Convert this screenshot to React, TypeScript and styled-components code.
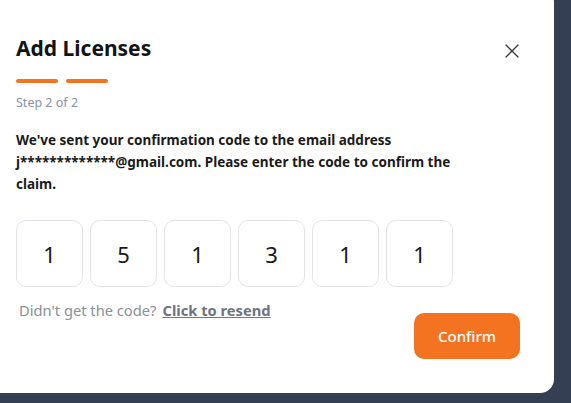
import React from "react";
import styled, { createGlobalStyle } from "styled-components";

const Global = createGlobalStyle`
  html, body { margin: 0; padding: 0; background: #343f53; overflow: hidden; }
  body { font-family: "Noto Sans", "Open Sans", sans-serif; width: 571px; height: 403px; }
`;

const Panel = styled.div`
  box-sizing: border-box;
  width: 570px;
  height: 405px;
  margin-top: -12px;
  margin-left: -16px;
  background: #ffffff;
  border-radius: 14px;
  padding: 44px 29px 0 32px;
  display: flex;
  flex-direction: column;
`;

const Header = styled.div`
  display: flex;
  align-items: center;
  justify-content: space-between;
`;

const Title = styled.h2`
  margin: 0;
  font-size: 21px;
  line-height: 28px;
  font-weight: 700;
  color: #141414;
`;

const CloseButton = styled.button`
  border: none;
  background: none;
  padding: 0;
  width: 26px;
  height: 26px;
  display: flex;
  align-items: center;
  justify-content: center;
  color: #3a3a3a;
  cursor: pointer;
  margin-top: 6px;
`;

const Steps = styled.div`
  display: flex;
  gap: 8px;
  margin-top: 15px;
`;

const StepBar = styled.div<{ $active: boolean }>`
  width: 42px;
  height: 4px;
  border-radius: 2px;
  background: ${(p) => (p.$active ? "#f37321" : "#e5e7eb")};
`;

const StepLabel = styled.div`
  margin-top: 12px;
  font-size: 12.5px;
  line-height: 16px;
  color: #8793a8;
`;

const Message = styled.p`
  margin: 18px 0 0;
  font-size: 13.5px;
  line-height: 22px;
  font-weight: 700;
  color: #1b1b1b;
  max-width: 470px;
`;

const CodeRow = styled.div`
  display: flex;
  gap: 7px;
  margin-top: 25px;
`;

const CodeBox = styled.div`
  box-sizing: border-box;
  width: 67px;
  height: 67px;
  border: 1px solid #e3e3ec;
  border-radius: 10px;
  display: flex;
  align-items: center;
  justify-content: center;
  font-size: 22px;
  color: #1a1a1a;
`;

const Footer = styled.div`
  display: flex;
  justify-content: space-between;
  align-items: flex-start;
  margin-top: 13px;
  padding-right: 5px;
`;

const Resend = styled.div`
  font-size: 14.7px;
  line-height: 20px;
  color: #8a8f99;
  padding-left: 3px;
`;

const ResendLink = styled.a`
  font-weight: 700;
  color: #6d7485;
  text-decoration: underline;
  margin-left: 6px;
`;

const ConfirmButton = styled.button`
  margin-top: 13px;
  width: 106px;
  height: 46px;
  border: none;
  border-radius: 10px;
  background: #f37321;
  color: #ffffff;
  font-family: inherit;
  font-size: 15px;
  font-weight: 500;
  cursor: pointer;
`;

export default function App() {
  const digits = ["1", "5", "1", "3", "1", "1"];
  return (
    <>
      <Global />
      <Panel>
        <Header>
          <Title>Add Licenses</Title>
          <CloseButton aria-label="Close">
            <svg width="14" height="14" viewBox="0 0 14 14" fill="none">
              <path d="M1 1L13 13M13 1L1 13" stroke="currentColor" strokeWidth="1.3" strokeLinecap="round" />
            </svg>
          </CloseButton>
        </Header>
        <Steps>
          <StepBar $active />
          <StepBar $active />
        </Steps>
        <StepLabel>Step 2 of 2</StepLabel>
        <Message>
          We've sent your confirmation code to the email address j*************@gmail.com. Please enter the code to
          confirm the claim.
        </Message>
        <CodeRow>
          {digits.map((d, i) => (
            <CodeBox key={i}>{d}</CodeBox>
          ))}
        </CodeRow>
        <Footer>
          <Resend>
            Didn't get the code?<ResendLink href="#">Click to resend</ResendLink>
          </Resend>
          <ConfirmButton>Confirm</ConfirmButton>
        </Footer>
      </Panel>
    </>
  );
}
